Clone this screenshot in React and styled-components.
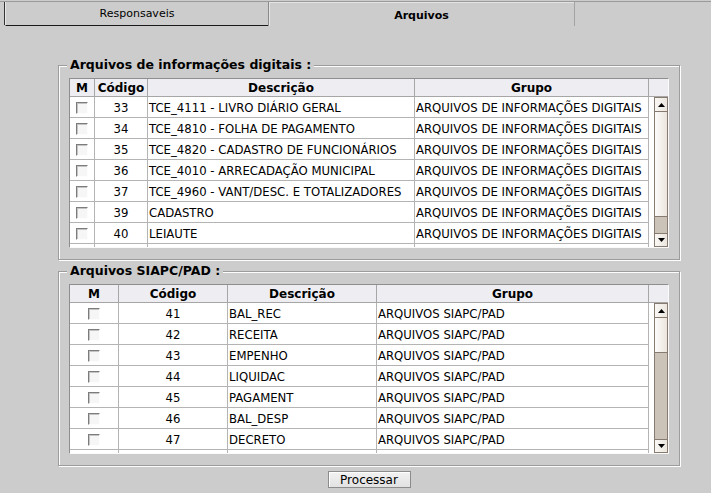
import React from "react"
import styled, { createGlobalStyle } from "styled-components"

const GRUPO_DIGITAIS = "ARQUIVOS DE INFORMAÇÕES DIGITAIS"
const GRUPO_SIAPC = "ARQUIVOS SIAPC/PAD"

const digitais = [
  { code: 33, desc: "TCE_4111 - LIVRO DIÁRIO GERAL" },
  { code: 34, desc: "TCE_4810 - FOLHA DE PAGAMENTO" },
  { code: 35, desc: "TCE_4820 - CADASTRO DE FUNCIONÁRIOS" },
  { code: 36, desc: "TCE_4010 - ARRECADAÇÃO MUNICIPAL" },
  { code: 37, desc: "TCE_4960 - VANT/DESC. E TOTALIZADORES" },
  { code: 39, desc: "CADASTRO" },
  { code: 40, desc: "LEIAUTE" },
  { code: 48, desc: "CONTAS" },
]

const siapc = [
  { code: 41, desc: "BAL_REC" },
  { code: 42, desc: "RECEITA" },
  { code: 43, desc: "EMPENHO" },
  { code: 44, desc: "LIQUIDAC" },
  { code: 45, desc: "PAGAMENT" },
  { code: 46, desc: "BAL_DESP" },
  { code: 47, desc: "DECRETO" },
  { code: 49, desc: "CONVENIO" },
]

const GlobalStyle = createGlobalStyle`
  html, body {
    margin: 0;
    padding: 0;
    background: #cccccc;
  }
  body {
    font-family: "DejaVu Sans", "Liberation Sans", sans-serif;
    color: #000;
  }
`

const Window = styled.div`
  width: 711px;
  height: 493px;
  overflow: hidden;
  background: #cccccc;
`

const TabStrip = styled.div`
  display: flex;
  margin-top: 1px;
  height: 24px;
  border-top: 1px solid #9a9a9a;
`

const TabEdge = styled.div`
  width: 4px;
  height: 23px;
  border-right: 1px solid #333;
`

const Tab = styled.div`
  display: flex;
  align-items: center;
  justify-content: center;
  box-sizing: border-box;
  width: ${(p) => (p.$active ? "307px" : "263px")};
  height: 24px;
  font-size: 11px;
  font-weight: ${(p) => (p.$active ? "bold" : "normal")};
  padding-top: ${(p) => (p.$active ? "3px" : "0")};
  border-bottom: ${(p) => (p.$active ? "none" : "1px solid #1a1a1a")};
  border-left: 1px solid ${(p) => (p.$active ? "#8a8a8a" : "#e8e8e8")};
  border-right: ${(p) => (p.$active ? "1px solid #a4a4a4" : "none")};
  box-shadow: ${(p) => (p.$active ? "inset 1px 1px 0 #e4e4e4" : "none")};
`

const Content = styled.div`
  padding: 39px 0 0 58px;
`

const GroupBox = styled.div`
  position: relative;
  box-sizing: border-box;
  width: 622px;
  margin-bottom: ${(p) => p.$gap || 0}px;
  padding: 12px 10px 11px 10px;
  border: 1px solid #9c9c9c;
  box-shadow: inset 1px 1px 0 #fdfdfd, 1px 1px 0 #fdfdfd;
`

const GroupTitle = styled.span`
  position: absolute;
  top: -9px;
  left: 8px;
  padding: 0 3px;
  background: #cccccc;
  font-size: 12.5px;
  font-weight: bold;
  line-height: 16px;
`

const TableFrame = styled.div`
  width: 600px;
  box-sizing: border-box;
  border-top: 1px solid #8e8e8e;
  border-left: 1px solid #8e8e8e;
  border-bottom: 1px solid #fafafa;
  border-right: 1px solid #fafafa;
  background: #fff;
`

const HeaderRow = styled.div`
  display: grid;
  grid-template-columns: ${(p) => p.$cols} 19px;
  height: 18px;
  background: #eeeef2;
`

const HeaderCell = styled.div`
  display: flex;
  align-items: center;
  justify-content: center;
  box-sizing: border-box;
  border-right: 1px solid #a6a6a6;
  border-bottom: 1px solid #a6a6a6;
  font-size: 12px;
  font-weight: bold;
  white-space: nowrap;
  overflow: hidden;
`

const HeaderCorner = styled.div`
  border-bottom: 1px solid #a6a6a6;
`

const Body = styled.div`
  display: flex;
  height: 150px;
  background: #fff;
`

const Rows = styled.div`
  width: 579px;
  height: 150px;
  overflow: hidden;
`

const Row = styled.div`
  display: grid;
  grid-template-columns: ${(p) => p.$cols};
  height: 21px;
`

const Cell = styled.div`
  display: flex;
  align-items: center;
  justify-content: ${(p) => (p.$center ? "center" : "flex-start")};
  box-sizing: border-box;
  padding-left: ${(p) => (p.$center ? "0" : "1px")};
  padding-top: 1px;
  border-right: 1px solid #b4b4b4;
  border-bottom: 1px solid #b4b4b4;
  font-size: 11.7px;
  white-space: nowrap;
  overflow: hidden;
`

const Check = styled.span`
  width: 12px;
  height: 12px;
  box-sizing: border-box;
  border-top: 1px solid #7c7c7c;
  border-left: 1px solid #7c7c7c;
  border-right: 1px solid #fdfdfd;
  border-bottom: 1px solid #fdfdfd;
  background: #f6f6f6;
  box-shadow: inset 1px 1px 0 #c4c4c4;
`

const ScrollBar = styled.div`
  display: flex;
  flex-direction: column;
  box-sizing: border-box;
  width: 14px;
  margin-left: auto;
  border-left: 1px solid #867b6e;
  border-right: 1px solid #867b6e;
  background: #cbc3b8;
`

const ScrollButton = styled.div`
  display: flex;
  align-items: center;
  justify-content: center;
  flex: 0 0 ${(p) => (p.$up ? "15px" : "14px")};
  box-sizing: border-box;
  border-top: 1px solid #867b6e;
  border-bottom: 1px solid #867b6e;
  background: linear-gradient(to right, #faf8f5, #ebe6df);
`

const Thumb = styled.div`
  display: flex;
  align-items: center;
  justify-content: center;
  flex: 0 0 ${(p) => p.$size}px;
  box-sizing: border-box;
  border-bottom: 1px solid #867b6e;
  background: linear-gradient(to right, #fdfcfb, #ebe5dc);
`

const Grip = styled.div`
  width: 8px;
  height: 14px;
  background-image: radial-gradient(circle, #d6cec3 0.5px, transparent 0.7px);
  background-size: 2px 2px;
`

const Track = styled.div`
  flex: 1;
`

const Footer = styled.div`
  display: flex;
  justify-content: center;
  width: 622px;
  margin-top: 5px;
`

const Button = styled.button`
  width: 83px;
  height: 17px;
  padding: 0;
  border: 1px solid #8c8c8c;
  background: linear-gradient(#f2f2f2, #e2e2e2);
  font-family: "DejaVu Sans", sans-serif;
  font-size: 12px;
  line-height: 14px;
  color: #000;
  box-shadow: inset 1px 1px 0 #fff;
`

const Arrow = ({ up }) => (
  <svg width="7" height="4" viewBox="0 0 7 4">
    <path d={up ? "M0 4 L3.5 0 L7 4 Z" : "M0 0 L3.5 4 L7 0 Z"} fill="#000" />
  </svg>
)

const Scroller = ({ thumb }) => (
  <ScrollBar>
    <ScrollButton $up>
      <Arrow up />
    </ScrollButton>
    <Thumb $size={thumb}>
      <Grip />
    </Thumb>
    <Track />
    <ScrollButton>
      <Arrow />
    </ScrollButton>
  </ScrollBar>
)

const FileTable = ({ cols, items, grupo, thumb }) => (
  <TableFrame>
    <HeaderRow $cols={cols}>
      <HeaderCell>M</HeaderCell>
      <HeaderCell>Código</HeaderCell>
      <HeaderCell>Descrição</HeaderCell>
      <HeaderCell>Grupo</HeaderCell>
      <HeaderCorner />
    </HeaderRow>
    <Body>
      <Rows>
        {items.map((item) => (
          <Row key={item.code} $cols={cols}>
            <Cell $center>
              <Check />
            </Cell>
            <Cell $center>{item.code}</Cell>
            <Cell>{item.desc}</Cell>
            <Cell>{grupo}</Cell>
          </Row>
        ))}
      </Rows>
      <Scroller thumb={thumb} />
    </Body>
  </TableFrame>
)

export default function App() {
  return (
    <Window>
      <GlobalStyle />
      <TabStrip>
        <TabEdge />
        <Tab>Responsaveis</Tab>
        <Tab $active>Arquivos</Tab>
      </TabStrip>
      <Content>
        <GroupBox $gap={11}>
          <GroupTitle>Arquivos de informações digitais :</GroupTitle>
          <FileTable
            cols="25px 53px 267px 234px"
            items={digitais}
            grupo={GRUPO_DIGITAIS}
            thumb={105}
          />
        </GroupBox>
        <GroupBox>
          <GroupTitle>Arquivos SIAPC/PAD :</GroupTitle>
          <FileTable
            cols="49px 109px 149px 272px"
            items={siapc}
            grupo={GRUPO_SIAPC}
            thumb={35}
          />
        </GroupBox>
        <Footer>
          <Button>Processar</Button>
        </Footer>
      </Content>
    </Window>
  )
}
